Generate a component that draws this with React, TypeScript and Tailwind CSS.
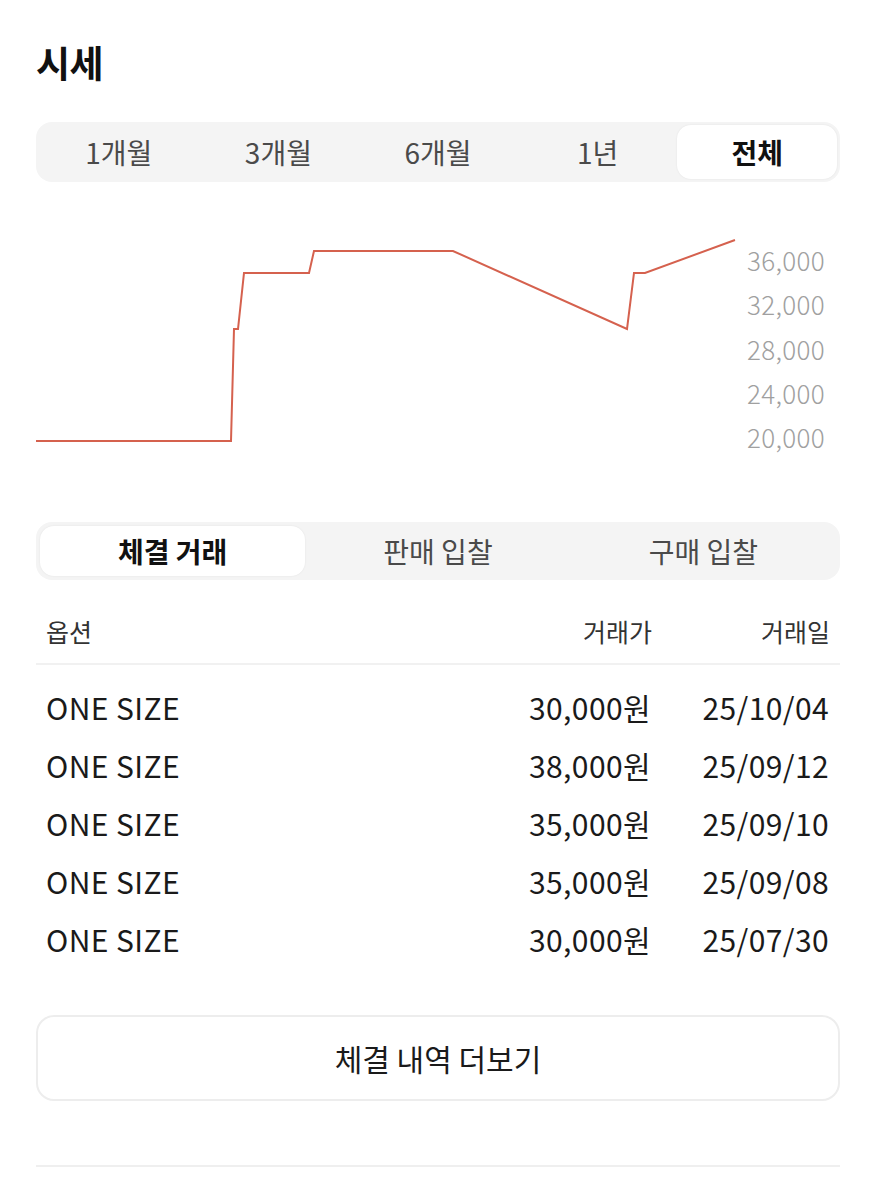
const periods = ['1개월', '3개월', '6개월', '1년', '전체']
const tradeTabs = ['체결 거래', '판매 입찰', '구매 입찰']
const axis = ['36,000', '32,000', '28,000', '24,000', '20,000']

const trades = [
  { option: 'ONE SIZE', price: '30,000원', date: '25/10/04' },
  { option: 'ONE SIZE', price: '38,000원', date: '25/09/12' },
  { option: 'ONE SIZE', price: '35,000원', date: '25/09/10' },
  { option: 'ONE SIZE', price: '35,000원', date: '25/09/08' },
  { option: 'ONE SIZE', price: '30,000원', date: '25/07/30' },
]

// chart points, relative to chart box (x from 36, y from 210)
const points = [
  [0, 231], [195, 231], [198, 119], [202, 119], [208, 63], [273, 63],
  [278, 41], [417, 41], [591, 119], [598, 63], [609, 63], [699, 30],
]

export default function App() {
  const activePeriod = '전체'
  const activeTab = '체결 거래'

  return (
    <div
      className="w-[876px] min-h-[1200px] bg-white px-9 pt-[39px]"
      style={{ fontFamily: '"Noto Sans CJK KR", "Noto Sans", sans-serif' }}
    >
      <h1 className="text-[37px] leading-[46px] font-semibold text-[#111] tracking-[-0.5px]">시세</h1>

      {/* 기간 선택 */}
      <div className="mt-[37px] h-[60px] rounded-[16px] bg-[#f4f4f4] p-[3px] flex">
        {periods.map(p => {
          const active = p === activePeriod
          return (
            <div
              key={p}
              className={
                active
                  ? 'flex-1 flex items-center justify-center rounded-[14px] bg-white shadow-[0_0_2px_rgba(0,0,0,0.08)] text-[28px] font-semibold text-[#111]'
                  : 'flex-1 flex items-center justify-center text-[28px] text-[#4a4a4a]'
              }
            >
              {p}
            </div>
          )
        })}
      </div>

      {/* 차트 */}
      <div className="mt-[28px] h-[260px] flex">
        <svg width="711" height="260" viewBox="0 0 711 260" className="shrink-0">
          <polyline
            points={points.map(p => p.join(',')).join(' ')}
            fill="none"
            stroke="#d5614e"
            strokeWidth="2"
            strokeLinejoin="miter"
          />
        </svg>
        <div className="pt-[28px] flex flex-col">
          {axis.map(a => (
            <div key={a} className="h-[44.25px] leading-[44.25px] text-[26px] font-light text-[#a0a0a0] tracking-[0.3px]">
              {a}
            </div>
          ))}
        </div>
      </div>

      {/* 거래 탭 */}
      <div className="mt-[52px] h-[58px] rounded-[16px] bg-[#f4f4f4] p-[4px] flex">
        {tradeTabs.map(t => {
          const active = t === activeTab
          return (
            <div
              key={t}
              className={
                active
                  ? 'flex-1 flex items-center justify-center rounded-[14px] bg-white shadow-[0_0_2px_rgba(0,0,0,0.08)] text-[28px] font-semibold text-[#111]'
                  : 'flex-1 flex items-center justify-center text-[28px] text-[#4a4a4a]'
              }
            >
              {t}
            </div>
          )
        })}
      </div>

      {/* 테이블 헤더 */}
      <div className="mt-[32px] h-[40px] flex items-center px-[10px] text-[25px] text-[#333]">
        <div className="flex-1">옵션</div>
        <div className="w-[200px] text-right">거래가</div>
        <div className="w-[178px] text-right">거래일</div>
      </div>
      <div className="mt-[11px] h-[2px] bg-[#f1f1f1]" />

      {/* 거래 내역 */}
      <div className="pt-[13px]">
        {trades.map((r, i) => (
          <div key={i} className="h-[58px] flex items-center pl-[10px] pr-[11px] text-[30px] text-[#1a1a1a] tracking-[0.4px]">
            <div className="flex-1">{r.option}</div>
            <div className="w-[200px] text-right">{r.price}</div>
            <div className="w-[178px] text-right">{r.date}</div>
          </div>
        ))}
      </div>

      <button className="mt-[47px] w-full h-[86px] rounded-[18px] border-2 border-[#ededed] bg-white text-[30px] text-[#1a1a1a]">
        체결 내역 더보기
      </button>

      <div className="mt-[64px] h-[2px] bg-[#efefef]" />
    </div>
  )
}
